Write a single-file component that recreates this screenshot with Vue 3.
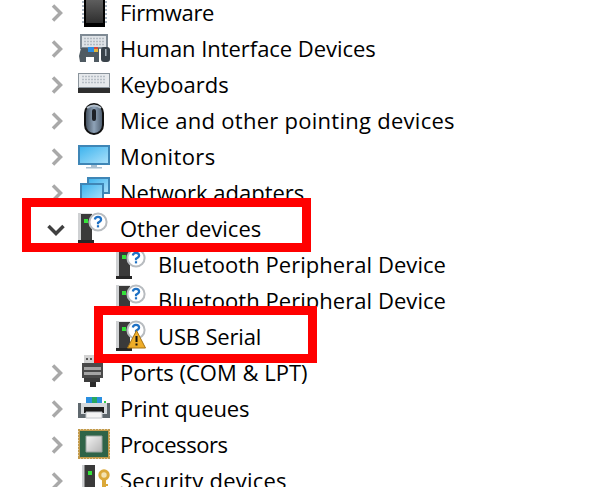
<script setup>
const rows = [
  { label: 'Firmware', icon: 'chip', state: 'closed', track: -0.35 },
  { label: 'Human Interface Devices', icon: 'hid', state: 'closed', track: -0.05 },
  { label: 'Keyboards', icon: 'keyboard', state: 'closed', track: 0 },
  { label: 'Mice and other pointing devices', icon: 'mouse', state: 'closed', track: 0.27 },
  { label: 'Monitors', icon: 'monitor', state: 'closed', track: 0.37 },
  { label: 'Network adapters', icon: 'network', state: 'closed', track: 0 },
  { label: 'Other devices', icon: 'other', state: 'open', track: 0 },
  { label: 'Bluetooth Peripheral Device', icon: 'other', child: true, track: 0.05 },
  { label: 'Bluetooth Peripheral Device', icon: 'other', child: true, track: 0.05 },
  { label: 'USB Serial', icon: 'warn', child: true, track: -0.16 },
  { label: 'Ports (COM & LPT)', icon: 'port', state: 'closed', track: 0 },
  { label: 'Print queues', icon: 'printer', state: 'closed', track: -0.08 },
  { label: 'Processors', icon: 'cpu', state: 'closed', track: -0.45 },
  { label: 'Security devices', icon: 'security', state: 'closed', track: 0.22 },
]
</script>

<template>
  <div class="page">
    <svg class="defs" aria-hidden="true">
      <defs>
        <linearGradient id="screen" x1="0" y1="0" x2="1" y2="1">
          <stop offset="0" stop-color="#3fb4ee" />
          <stop offset="1" stop-color="#a9e0fa" />
        </linearGradient>
        <linearGradient id="mouseBody" x1="0" y1="0" x2="1" y2="0">
          <stop offset="0" stop-color="#3e4a58" />
          <stop offset=".5" stop-color="#8fa3b8" />
          <stop offset="1" stop-color="#4b5a6b" />
        </linearGradient>
        <linearGradient id="die" x1="0" y1="0" x2="1" y2="1">
          <stop offset="0" stop-color="#f4f4f4" />
          <stop offset="1" stop-color="#b4b4b4" />
        </linearGradient>
        <linearGradient id="chipBody" x1="0" y1="0" x2="0" y2="1">
          <stop offset="0" stop-color="#6a6a6a" />
          <stop offset="1" stop-color="#2e2e2e" />
        </linearGradient>

        <g id="chip">
          <path d="M4 0h2v2H4zM4 4h2v2H4zM4 8h2v2H4zM4 12h2v2H4zM4 16h2v2H4zM4 20h2v2H4zM4 24h2v2H4zM27 0h2v2h-2zM27 4h2v2h-2zM27 8h2v2h-2zM27 12h2v2h-2zM27 16h2v2h-2zM27 20h2v2h-2zM27 24h2v2h-2z" fill="#a8b4c0" />
          <path d="M6 -3h21v33H6z" fill="#000" />
          <path d="M8 -3h5v2q3 3 7 0v-2h5v29H8z" fill="url(#chipBody)" />
        </g>

        <g id="hid">
          <path d="M2 1h28v15H2z" fill="#7f8a94" />
          <path d="M4 3h24v11H4z" fill="#dfe3e7" />
          <path d="M6 5.500h20M6 8.500h20M6 11.500h20" stroke="#b3bac1" stroke-width="1.500" stroke-dasharray="2 1" />
          <path d="M3 15h6l2 1h7l3-1v14h-5v-5h-8v5H2l-1-6z" fill="#4f5a62" />
          <path d="M10 14h6v5h-6z" fill="#2b8de0" />
          <path d="M16 14h4v2h-4z" fill="#d64a3a" />
          <path d="M16 16h4v3h-4z" fill="#e0b53a" />
          <rect x="23" y="14" width="9" height="15" rx="3" fill="#39424a" />
          <path d="M27 16h1.500v7H27z" fill="#a5afb8" />
        </g>

        <g id="keyboard">
          <path d="M0 4h32v20H0z" fill="#8b949c" />
          <path d="M1 5h30v13H1z" fill="#e6e9ec" />
          <path d="M4 7.500h24M4 10.500h24M4 13.500h24" stroke="#b7bec5" stroke-width="1.500" stroke-dasharray="2 1" />
          <path d="M0 19h32v5H0z" fill="#2e2e2e" />
        </g>

        <g id="mouse">
          <rect x="7" y="-1" width="18" height="30" rx="9" fill="url(#mouseBody)" stroke="#111" stroke-width="2" />
          <path d="M9 3q7-5 14 0" fill="none" stroke="#b4c0cc" stroke-width="2" />
          <rect x="14" y="4" width="4" height="12" rx="2" fill="#1d2127" />
        </g>

        <g id="monitor">
          <path d="M0 4h32v20H0z" fill="#3f86b6" />
          <path d="M2 6h28v16H2z" fill="url(#screen)" />
          <path d="M13 24h6v2h-6zM8 26h16v1.500H8z" fill="#a9bfd0" />
        </g>

        <g id="network">
          <path d="M9 0h23v17H9z" fill="#3f86b6" />
          <path d="M11 2h19v13H11z" fill="url(#screen)" />
          <path d="M2 6h24v19H2z" fill="#3f86b6" />
          <path d="M4 8h20v15H4z" fill="url(#screen)" />
        </g>

        <g id="tower">
          <path d="M0 0h14v28H0z" fill="#3a3a3a" />
          <path d="M0 0h3v28H0z" fill="#cfd1d3" />
          <path d="M3 0h11v1H3z" fill="#e2e3e4" />
          <path d="M0 27h16v3H0z" fill="#262626" />
          <path d="M6 6h4v4H6z" fill="#35e23a" />
        </g>

        <g id="question">
          <circle cx="20" cy="9" r="8.600" fill="#fff" stroke="#b8bcc0" stroke-width="2" />
          <path d="M16.800 6.500q.4-2.700 3.200-2.700 3.100 0 3.100 2.700 0 1.700-3.100 3.300v1.400" fill="none" stroke="#1f71c4" stroke-width="2.200" />
          <path d="M18.900 12.200h2.200v2.200h-2.200z" fill="#1f71c4" />
        </g>

        <g id="other">
          <use href="#tower" />
          <use href="#question" />
        </g>

        <g id="warn">
          <use href="#tower" />
          <use href="#question" />
          <path d="M20.500 9.500L29.500 27h-18z" fill="#efad28" stroke="#a87414" stroke-width="1" stroke-linejoin="round" />
          <path d="M19.500 15h2v6h-2zM19.500 22.500h2v2h-2z" fill="#111" />
        </g>

        <g id="port">
          <path d="M6 -2h10v9H6z" fill="#d2d2d2" />
          <path d="M8 1h2v2H8zM12 1h2v2h-2z" fill="#555" />
          <path d="M4 6h21v15H4z" fill="#4a4a4a" />
          <path d="M6 10h17v3H6zM6 15h17v3H6z" fill="#a5a5a5" />
          <path d="M6 21h16v4H6z" fill="#3c3c3c" />
          <path d="M12 25h6v5h-6z" fill="#2c2c2c" />
        </g>

        <g id="printer">
          <path d="M8 4h16v7H8z" fill="#2a8fe0" />
          <path d="M14 4h5v7h-5z" fill="#28a860" />
          <path d="M0 10h32v15H0z" fill="#5f686e" />
          <path d="M3 10h26v11H3z" fill="#d5d9dc" />
          <path d="M6 14h20v6H6z" fill="#1d1d1d" />
          <path d="M8 19h16v6H8z" fill="#f5f5f5" stroke="#c2c6ca" />
          <path d="M26 8h2v2h-2z" fill="#2fd04a" />
        </g>

        <g id="cpu">
          <path d="M0 0h32v30H0z" fill="#c29a4a" />
          <path d="M2 2h28v26H2z" fill="#2f6448" />
          <path d="M8 7h16v16H8z" fill="url(#die)" stroke="#9aa5a0" />
          <path d="M0 2v26M32 2v26M2 0h28M2 30h28" stroke="#fff" stroke-width="1" stroke-dasharray="1 2" />
        </g>

        <g id="security">
          <path d="M4 0h13v30H4z" fill="#3a3a3a" />
          <path d="M4 0h2.500v30H4z" fill="#cfd1d3" />
          <path d="M10 6h4v4h-4z" fill="#35e23a" />
          <circle cx="26" cy="10" r="4.200" fill="#f3e2b0" stroke="#dba93a" stroke-width="3" />
          <path d="M24 14h4v10h-4zM28 19h2v2h-2z" fill="#dba93a" />
        </g>
      </defs>
    </svg>

    <ul class="tree">
      <li v-for="(row, i) in rows" :key="i" class="row" :class="{ child: row.child }">
        <span class="twisty">
          <svg v-if="row.state === 'closed'" class="chev" width="14" height="18" viewBox="0 0 14 18">
            <path d="M3 1.500L10.500 9 3 16.500" fill="none" stroke="#a9a9a9" stroke-width="3.500" />
          </svg>
          <svg v-else-if="row.state === 'open'" class="chev down" width="20" height="14" viewBox="0 0 20 14">
            <path d="M2.500 3l7.500 7.500L17.500 3" fill="none" stroke="#404040" stroke-width="3.500" />
          </svg>
        </span>
        <svg class="icon" width="32" height="32" viewBox="0 0 32 32">
          <use :href="'#' + row.icon" />
        </svg>
        <span class="label" :style="{ letterSpacing: row.track + 'px' }">{{ row.label }}</span>
      </li>
    </ul>

    <div class="mark mark-group"></div>
    <div class="mark mark-device"></div>
  </div>
</template>

<style scoped>
.page {
  position: relative;
  width: 609px;
  height: 487px;
  overflow: hidden;
  background: #fff;
}
.defs {
  display: block;
  width: 0;
  height: 0;
}
.tree {
  list-style: none;
  margin: -5px 0 0;
  padding: 0 0 0 44px;
}
.row {
  display: flex;
  align-items: center;
  height: 36px;
  font-family: "Open Sans", sans-serif;
  font-size: 22px;
  line-height: 30px;
  color: #000;
  white-space: nowrap;
}
.row.child {
  padding-left: 38px;
}
.twisty {
  flex: none;
  width: 34px;
  display: flex;
  padding-left: 6px;
  box-sizing: border-box;
}
.child .twisty {
  visibility: hidden;
}
.chev {
  display: block;
}
.chev.down {
  margin: 2px 0 0 -4px;
}
.icon {
  flex: none;
  overflow: visible;
}
.label {
  margin: 0 0 2px 10px;
}
.mark {
  position: absolute;
  box-sizing: border-box;
  border: 9px solid #ff0000;
}
.mark-group {
  left: 22px;
  top: 198px;
  width: 289px;
  height: 54px;
}
.mark-device {
  left: 94px;
  top: 306px;
  width: 223px;
  height: 57px;
}
</style>
